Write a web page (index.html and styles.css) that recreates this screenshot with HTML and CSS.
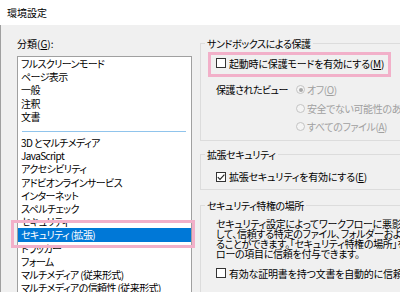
FILE: index.html
```html
<!DOCTYPE html>
<html lang="ja">
<head>
<meta charset="utf-8">
<title>環境設定</title>
<link rel="stylesheet" href="styles.css">
</head>
<body>
<div class="window">
  <div class="titlebar">環境設定</div>
  <div class="content">
    <div class="left">
      <div class="cat-label">分類(<u>G</u>):</div>
      <div class="listbox">
        <div class="item">フルスクリーンモード</div>
        <div class="item">ページ表示</div>
        <div class="item">一般</div>
        <div class="item">注釈</div>
        <div class="item">文書</div>
        <div class="sep"></div>
        <div class="item">3D とマルチメディア</div>
        <div class="item">JavaScript</div>
        <div class="item">アクセシビリティ</div>
        <div class="item">アドビオンラインサービス</div>
        <div class="item">インターネット</div>
        <div class="item">スペルチェック</div>
        <div class="item">セキュリティ</div>
        <div class="item selected">セキュリティ (拡張)</div>
        <div class="item">トラッカー</div>
        <div class="item">フォーム</div>
        <div class="item">マルチメディア (従来形式)</div>
        <div class="item">マルチメディアの信頼性 (従来形式)</div>
        <div class="item">ユーザー情報</div>
      </div>
    </div>
    <div class="right">
      <fieldset class="group g1">
        <legend>サンドボックスによる保護</legend>
        <div class="gbody">
          <div class="row first-row">
            <span class="cb"></span><span>起動時に保護モードを有効にする(<u>M</u>)</span>
          </div>
          <div class="pv">
            <div class="pv-label">保護されたビュー</div>
            <div class="radios">
              <div class="row disabled"><span class="rb on"></span><span>オフ(<u>O</u>)</span></div>
              <div class="row disabled"><span class="rb"></span><span>安全でない可能性のある場所のファイル(<u>U</u>)</span></div>
              <div class="row disabled"><span class="rb"></span><span>すべてのファイル(<u>A</u>)</span></div>
            </div>
          </div>
        </div>
      </fieldset>
      <fieldset class="group g2">
        <legend>拡張セキュリティ</legend>
        <div class="gbody">
          <div class="row">
            <span class="cb checked"><svg viewBox="0 0 10 10" width="10" height="10"><path d="M1.8 5.2 L4 7.4 L8.4 2.6" fill="none" stroke="#222" stroke-width="1.1"/></svg></span><span>拡張セキュリティを有効にする(<u>E</u>)</span>
          </div>
        </div>
      </fieldset>
      <fieldset class="group g3">
        <legend>セキュリティ特権の場所</legend>
        <div class="gbody">
          <div class="para">
            <div class="pline">セキュリティ設定によってワークフローに悪影響が及ぶ場合は、それらの設定を回避</div>
            <div class="pline">して、信頼する特定のファイル、フォルダーおよびホストを選択的に信頼す</div>
            <div class="pline">ることができます。「セキュリティ特権の場所」を使用すると、ワークフ</div>
            <div class="pline">ローの項目に信頼を付与できます。</div>
          </div>
          <div class="row last-row">
            <span class="cb"></span><span>有効な証明書を持つ文書を自動的に信頼(<u>T</u>)</span>
          </div>
        </div>
      </fieldset>
    </div>
    <div class="highlight hl-check"></div>
    <div class="highlight hl-list"></div>
  </div>
</div>
</body>
</html>
```

FILE: styles.css
```css
html, body {
  margin: 0;
  padding: 0;
  width: 400px;
  height: 292px;
  overflow: hidden;
}

body {
  font-family: "Noto Sans CJK JP", "Noto Sans", sans-serif;
  font-size: 10px;
  font-feature-settings: "palt";
  color: #000;
  background: #f0f0f0;
}

u {
  text-decoration: underline;
  text-underline-offset: 1px;
}

.window {
  width: 400px;
  height: 292px;
  overflow: hidden;
}

.titlebar {
  height: 25px;
  line-height: 25px;
  padding-left: 7px;
  background: #fff;
}

.content {
  position: relative;
  display: flex;
  height: 267px;
  border-left: 1px solid #a0a0a0;
}

.left {
  flex: none;
  width: 175px;
  padding-left: 16px;
  padding-top: 12px;
}

.cat-label {
  line-height: 13px;
}

.listbox {
  margin-top: 6px;
  box-sizing: border-box;
  width: 175px;
  height: 260px;
  border: 1px solid #a0a0a0;
  background: #fff;
}

.item {
  line-height: 13.2px;
  padding-left: 3px;
  white-space: nowrap;
  letter-spacing: -0.6px;
}

.item.selected {
  background: #0078d7;
  color: #fff;
}

.sep {
  height: 1px;
  margin: 8px 5px 4px 4px;
  background: #90c4ec;
}

.right {
  flex: none;
  width: 240px;
  margin-left: 8px;
  padding-top: 11.5px;
}

.group {
  margin: 0;
  padding: 0;
  border: 1px solid #dcdcdc;
  min-width: 0;
}

.group legend {
  margin-left: 4px;
  padding: 0 2px;
  line-height: 13px;
  letter-spacing: -0.4px;
}

.gbody {
  padding-left: 15px;
}

.row {
  display: flex;
  align-items: center;
  height: 13px;
  white-space: nowrap;
  letter-spacing: -0.2px;
}

.cb {
  flex: none;
  box-sizing: border-box;
  width: 10px;
  height: 10px;
  border: 1px solid #333;
  background: #fff;
  margin-right: 3px;
  position: relative;
}

.cb svg {
  position: absolute;
  left: -1px;
  top: -1px;
}

.g1 .gbody {
  padding-bottom: 6.5px;
}

.first-row {
  margin-top: 7px;
}

.pv {
  display: flex;
  margin-top: 13.5px;
}

.pv-label {
  flex: none;
  width: 80px;
  line-height: 13px;
  white-space: nowrap;
  letter-spacing: -0.5px;
}

.radios {
  display: flex;
  flex-direction: column;
  gap: 5.5px;
}

.radios .row {
  letter-spacing: -0.4px;
}

.disabled {
  color: #a0a0a0;
}

.rb {
  flex: none;
  box-sizing: border-box;
  width: 9px;
  height: 9px;
  border: 1px solid #c4c4c4;
  border-radius: 50%;
  background: #f4f4f4;
  margin-right: 2px;
  display: flex;
  align-items: center;
  justify-content: center;
}

.rb.on::after {
  content: "";
  width: 4px;
  height: 4px;
  border-radius: 50%;
  background: #a8a8a8;
}

.g2 {
  margin-top: 7.5px;
}

.g2 .row {
  margin-top: 9px;
}

.g2 .gbody {
  padding-bottom: 5.5px;
}

.g3 {
  margin-top: 9px;
  height: 120px;
}

.para {
  margin-top: 7.7px;
}

.pline {
  line-height: 10px;
  white-space: nowrap;
  letter-spacing: -0.3px;
}

.last-row {
  margin-top: 7.5px;
}

.highlight {
  position: absolute;
  box-sizing: border-box;
  border: 3px solid #f2b0c9;
  pointer-events: none;
}

.hl-check {
  left: 207px;
  top: 27px;
  width: 183px;
  height: 25px;
}

.hl-list {
  left: 10px;
  top: 195px;
  width: 184px;
  height: 28px;
}
```
